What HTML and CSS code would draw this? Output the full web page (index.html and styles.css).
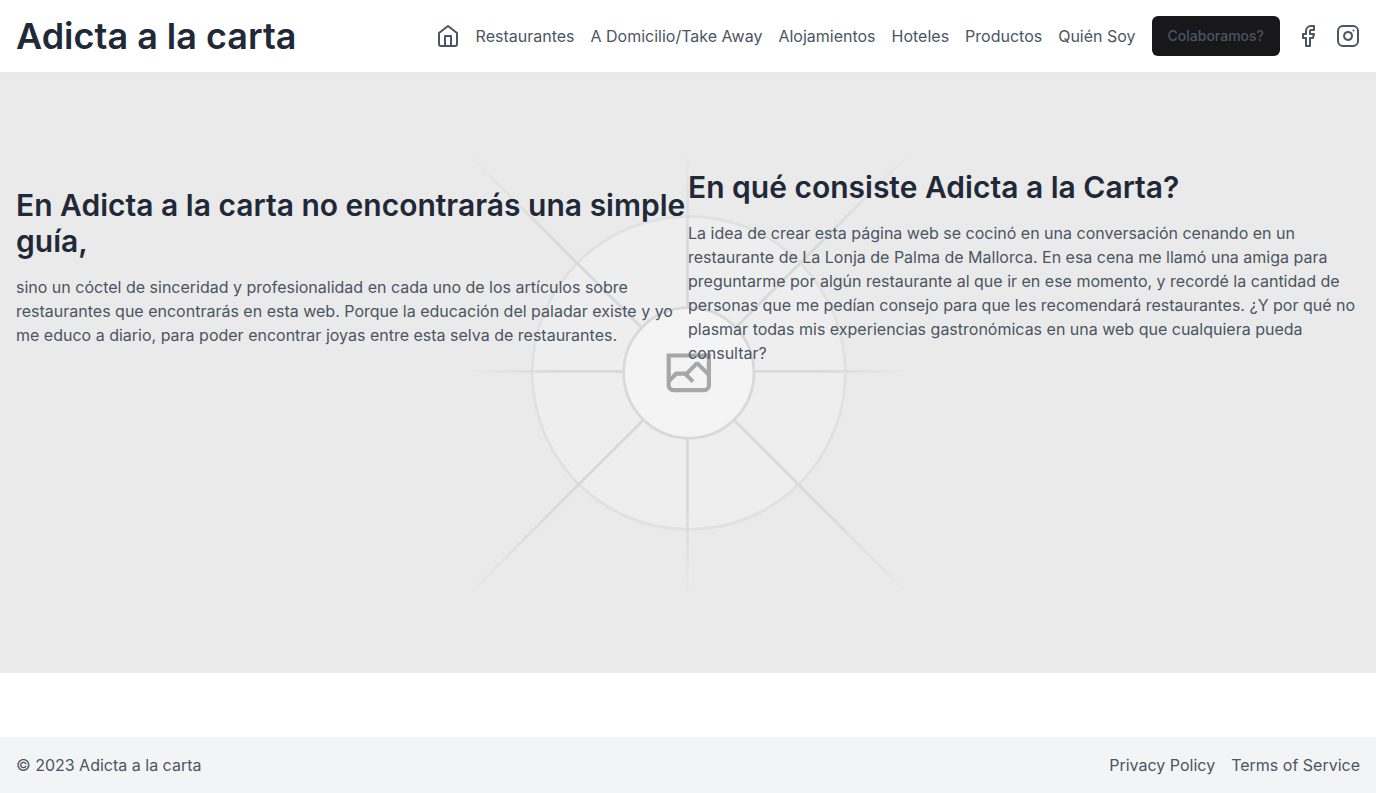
FILE: index.html
```
<!DOCTYPE html>
<html lang="es">
<head>
<meta charset="utf-8">
<meta name="viewport" content="width=device-width, initial-scale=1">
<title>Adicta a la carta</title>
<link rel="stylesheet" href="styles.css">
</head>
<body>
<header class="site-header">
  <h1 class="brand">Adicta a la carta</h1>
  <nav class="nav" aria-label="Principal">
    <a class="icon-link" href="#" aria-label="Inicio">
      <svg class="icon" viewBox="0 0 24 24"><path d="m3 9 9-7 9 7v11a2 2 0 0 1-2 2H5a2 2 0 0 1-2-2z"/><polyline points="9 22 9 12 15 12 15 22"/></svg>
    </a>
    <a href="#">Restaurantes</a>
    <a href="#">A Domicilio/Take Away</a>
    <a href="#">Alojamientos</a>
    <a href="#">Hoteles</a>
    <a href="#">Productos</a>
    <a href="#">Quién Soy</a>
    <button class="button" type="button">Colaboramos?</button>
    <a class="icon-link" href="#" aria-label="Facebook">
      <svg class="icon" viewBox="0 0 24 24"><path d="M18 2h-3a5 5 0 0 0-5 5v3H7v4h3v8h4v-8h3l1-4h-4V7a1 1 0 0 1 1-1h3z"/></svg>
    </a>
    <a class="icon-link" href="#" aria-label="Instagram">
      <svg class="icon" viewBox="0 0 24 24"><rect width="20" height="20" x="2" y="2" rx="5" ry="5"/><path d="M16 11.37A4 4 0 1 1 12.63 8 4 4 0 0 1 16 11.37z"/><line x1="17.5" x2="17.51" y1="6.5" y2="6.5"/></svg>
    </a>
  </nav>
</header>

<main>
  <section class="hero">
    <svg class="hero-image" viewBox="0 0 1200 1200" preserveAspectRatio="xMidYMid slice" fill="none" aria-hidden="true">
      <defs>
        <linearGradient id="fade-down" x1="408" y1="408" x2="792" y2="792" gradientUnits="userSpaceOnUse">
          <stop stop-color="#c9c9c9" stop-opacity="0"/><stop offset=".208" stop-color="#c9c9c9"/><stop offset=".792" stop-color="#c9c9c9"/><stop offset="1" stop-color="#c9c9c9" stop-opacity="0"/>
        </linearGradient>
        <linearGradient id="fade-up" x1="408" y1="792" x2="792" y2="408" href="#fade-down" gradientUnits="userSpaceOnUse"/>
        <linearGradient id="fade-x" x1="408" y1="0" x2="792" y2="0" href="#fade-down" gradientUnits="userSpaceOnUse"/>
        <linearGradient id="fade-y" x1="0" y1="408" x2="0" y2="792" href="#fade-down" gradientUnits="userSpaceOnUse"/>
      </defs>
      <g opacity=".5" stroke-width="2.418">
        <circle cx="600.709" cy="599.88" r="136.5" fill="#fafafa" stroke="#c9c9c9" opacity=".5"/>
        <path stroke="url(#fade-up)" d="M405.3 796.6 796.6 405.3"/>
        <path stroke="url(#fade-x)" d="M404.846 598.671h391.726"/>
        <path stroke="url(#fade-y)" d="M599.5 795.742V404.017"/>
        <path stroke="url(#fade-down)" d="m795.717 796.597-391.441-391.44"/>
        <circle cx="600.709" cy="599.88" r="56.825" fill="#fff" stroke="#c9c9c9"/>
        <path fill="#666" fill-rule="evenodd" d="M616.426 586.58h-31.434v16.176l3.553-3.554.531-.531h9.068l.074-.074 8.463-8.463h2.565l7.18 7.181V586.58Zm-15.715 14.654 3.698 3.699 1.283 1.282-2.565 2.565-1.282-1.283-5.2-5.199h-6.066l-5.514 5.514-.073.073v2.876a2.418 2.418 0 0 0 2.418 2.418h26.598a2.418 2.418 0 0 0 2.418-2.418v-8.317l-8.463-8.463-7.181 7.181-.071.072Zm-19.347 5.442v4.085a6.045 6.045 0 0 0 6.046 6.045h26.598a6.044 6.044 0 0 0 6.045-6.045V582.954h-38.689Z"/>
      </g>
    </svg>
    <div class="hero-content">
      <div class="intro">
        <h2>En Adicta a la carta no encontrarás una simple guía,</h2>
        <p>sino un cóctel de sinceridad y profesionalidad en cada uno de los artículos sobre restaurantes que encontrarás en esta web. Porque la educación del paladar existe y yo me educo a diario, para poder encontrar joyas entre esta selva de restaurantes.</p>
      </div>
      <div class="intro">
        <h2>En qué consiste Adicta a la Carta?</h2>
        <p>La idea de crear esta página web se cocinó en una conversación cenando en un restaurante de La Lonja de Palma de Mallorca. En esa cena me llamó una amiga para preguntarme por algún restaurante al que ir en ese momento, y recordé la cantidad de personas que me pedían consejo para que les recomendará restaurantes. ¿Y por qué no plasmar todas mis experiencias gastronómicas en una web que cualquiera pueda consultar?</p>
      </div>
    </div>
  </section>
</main>

<footer class="site-footer">
  <p>© 2023 Adicta a la carta</p>
  <nav class="footer-nav" aria-label="Legal">
    <a href="#">Privacy Policy</a>
    <a href="#">Terms of Service</a>
  </nav>
</footer>
</body>
</html>
```

FILE: styles.css
```
*,
*::before,
*::after {
  box-sizing: border-box;
}

body {
  margin: 0;
  background: #fff;
  color: #4b5563;
  font-family: Inter, "Liberation Sans", sans-serif;
  font-size: 16px;
  line-height: 24px;
}

h1,
h2,
p {
  margin: 0;
}

a {
  color: inherit;
  text-decoration: none;
}

.site-header {
  display: flex;
  align-items: center;
  justify-content: space-between;
  padding: 16px;
  border-bottom: 1px solid #e5e7eb;
}

.brand {
  color: #1f2937;
  font-size: 36px;
  font-weight: 600;
  line-height: 40px;
}

.nav,
.footer-nav {
  display: flex;
  align-items: center;
  gap: 16px;
}

.icon-link {
  display: flex;
}

.icon {
  width: 24px;
  height: 24px;
  fill: none;
  stroke: currentColor;
  stroke-width: 2;
  stroke-linecap: round;
  stroke-linejoin: round;
}

.button {
  height: 40px;
  padding: 8px 16px;
  border: 0;
  border-radius: 6px;
  background: #18181b;
  color: #4b5563;
  font: inherit;
  font-size: 14px;
  font-weight: 500;
}

.hero {
  position: relative;
  min-height: 600px;
  background: #eaeaea;
}

.hero-image {
  position: absolute;
  inset: 0;
  width: 100%;
  height: 100%;
}

.hero-content {
  position: relative;
  display: grid;
  grid-template-columns: 1fr 1fr;
  align-items: center;
  padding: 96px 16px;
}

.intro {
  display: grid;
  gap: 16px;
}

.intro h2 {
  color: #1f2937;
  font-size: 30px;
  font-weight: 600;
  line-height: 36px;
}

.site-footer {
  display: flex;
  align-items: center;
  justify-content: space-between;
  margin-top: 64px;
  padding: 16px;
  background: #f3f4f6;
}
```
